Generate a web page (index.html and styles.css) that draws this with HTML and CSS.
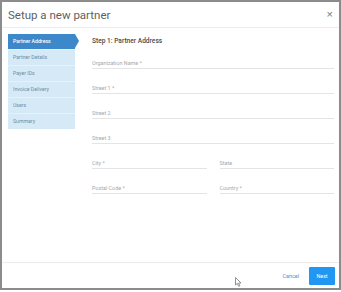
FILE: index.html
```html
<!DOCTYPE html>
<html lang="en">

<head>
    <meta charset="UTF-8">
    <meta name="viewport" content="width=device-width, initial-scale=1">
    <title>Setup a new partner</title>
    <link rel="stylesheet" href="styles.css">
</head>

<body>

    <div class="dialog">
        <div class="dialog_header">
            <div class="dialog_title">Setup a new partner</div>
            <button class="close">&times;</button>
        </div>

        <div class="dialog_body">
            <ul class="steps">
                <li class="step active">Partner Address</li>
                <li class="step">Partner Details</li>
                <li class="step">Payer IDs</li>
                <li class="step">Invoice Delivery</li>
                <li class="step">Users</li>
                <li class="step">Summary</li>
            </ul>

            <div class="content">
                <div class="step_title">Step 1: Partner Address</div>
                <div class="form">
                    <div class="field">Organization Name *</div>
                    <div class="field">Street 1 *</div>
                    <div class="field">Street 2</div>
                    <div class="field">Street 3</div>
                    <div class="field_row">
                        <div class="field">City *</div>
                        <div class="field">State</div>
                    </div>
                    <div class="field_row">
                        <div class="field">Postal Code *</div>
                        <div class="field">Country *</div>
                    </div>
                </div>
            </div>
        </div>

        <div class="dialog_footer">
            <button class="btn_cancel">Cancel</button>
            <button class="btn_next">Next</button>
        </div>

        <svg class="cursor" width="7" height="10" viewBox="0 0 7 10">
            <path d="M0.5 0.5 L0.5 8 L2.3 6.4 L3.6 9.3 L4.8 8.8 L3.6 6 L6 6 Z" fill="#fff" stroke="#777" stroke-width="0.8"/>
        </svg>
    </div>

</body>

</html>
```

FILE: styles.css
```css
body {
    margin: 0;
    background: #ffffff;
    font-family: 'Roboto', 'Liberation Sans', sans-serif;
}

.dialog {
    position: relative;
    width: 341px;
    height: 290px;
    box-sizing: border-box;
    border: 2px solid #8c8c8c;
    background: #ffffff;
    display: flex;
    flex-direction: column;
}

.dialog_header {
    height: 25px;
    display: flex;
    align-items: center;
    justify-content: space-between;
    padding: 0 6px;
    border-bottom: 1px solid #ececec;
}

.dialog_title {
    font-size: 11.5px;
    color: #5f5f5f;
    font-weight: 400;
}

.close {
    background: none;
    border: none;
    padding: 0;
    font-size: 11px;
    color: #777777;
    line-height: 1;
    cursor: pointer;
}

.dialog_body {
    flex: 1;
    display: flex;
    padding: 6px 5px 0 6px;
}

.steps {
    list-style: none;
    margin: 0;
    padding: 0;
    width: 67px;
    align-self: flex-start;
    background: #d6e9f6;
}

.step {
    position: relative;
    height: 15px;
    line-height: 15px;
    padding-left: 5px;
    font-size: 5.2px;
    color: #6c8ea6;
    border-bottom: 1px solid #e6f1f9;
}

.step:last-child {
    border-bottom: none;
}

.step.active {
    background: #3d88cb;
    color: #ffffff;
    font-weight: 500;
}

.step.active::after {
    content: "";
    position: absolute;
    top: 0;
    right: -4px;
    border-top: 7.5px solid transparent;
    border-bottom: 7.5px solid transparent;
    border-left: 4px solid #3d88cb;
}

.content {
    flex: 1;
    padding-left: 17px;
}

.step_title {
    line-height: 14px;
    font-size: 6.6px;
    font-weight: 500;
    color: #4a4a4a;
}

.form {
    display: flex;
    flex-direction: column;
    gap: 4px;
}

.field {
    padding-top: 10px;
    line-height: 10px;
    font-size: 5.4px;
    color: #a8a8a8;
    border-bottom: 1px solid #e4e4e4;
}

.field_row {
    display: flex;
    gap: 13px;
}

.field_row .field {
    flex: 1;
}

.dialog_footer {
    height: 25px;
    border-top: 1px solid #ececec;
    display: flex;
    align-items: center;
    justify-content: flex-end;
    gap: 10px;
    padding-right: 4px;
}

.btn_cancel {
    background: none;
    border: none;
    padding: 0;
    font-family: inherit;
    font-size: 5.4px;
    color: #4a90d6;
}

.btn_next {
    width: 26px;
    height: 18px;
    border: none;
    border-radius: 1px;
    background: #2196f3;
    color: #ffffff;
    font-family: inherit;
    font-size: 5.4px;
    padding: 0;
}

.cursor {
    position: absolute;
    left: 233px;
    top: 275px;
}
```
